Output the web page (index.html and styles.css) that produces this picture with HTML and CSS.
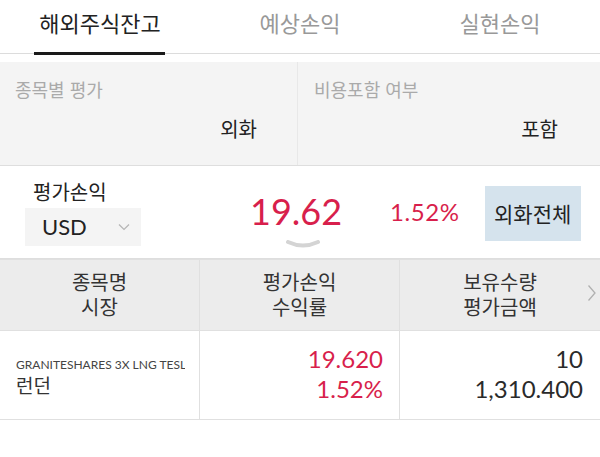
FILE: index.html
```html
<!DOCTYPE html>
<html lang="ko">
<head>
    <meta charset="UTF-8">
    <meta name="viewport" content="width=device-width, initial-scale=1.0">
    <title>해외주식잔고</title>
    <link rel="stylesheet" href="styles.css">
</head>
<body>
    <div class="tabs">
        <div class="tab active">해외주식잔고</div>
        <div class="tab">예상손익</div>
        <div class="tab">실현손익</div>
    </div>

    <div class="filters">
        <div class="filter">
            <div class="filter-label">종목별 평가</div>
            <div class="filter-value">외화</div>
        </div>
        <div class="filter">
            <div class="filter-label">비용포함 여부</div>
            <div class="filter-value">포함</div>
        </div>
    </div>

    <div class="summary">
        <div class="summary-left">
            <div class="summary-label">평가손익</div>
            <div class="currency">
                <span>USD</span>
                <svg class="caret" width="12" height="8" viewBox="0 0 12 8"><path d="M1 1.5 L6 6.5 L11 1.5" fill="none" stroke="#b5b5b5" stroke-width="1.2"/></svg>
            </div>
        </div>
        <div class="profit">19.62</div>
        <div class="rate">1.52%</div>
        <div class="fx-btn">외화전체</div>
        <svg class="expand" width="34" height="10" viewBox="0 0 34 10"><path d="M2 2 Q17 9 32 2" fill="none" stroke="#d4d4d4" stroke-width="4" stroke-linecap="round"/></svg>
    </div>

    <div class="table">
        <div class="row head">
            <div class="cell"><div>종목명</div><div>시장</div></div>
            <div class="cell"><div>평가손익</div><div>수익률</div></div>
            <div class="cell"><div>보유수량</div><div>평가금액</div></div>
            <svg class="more" width="10" height="18" viewBox="0 0 10 18"><path d="M1.5 1.5 L8 9 L1.5 16.5" fill="none" stroke="#b0b0b0" stroke-width="1.3"/></svg>
        </div>
        <div class="row body">
            <div class="cell name">
                <div class="ticker">GRANITESHARES 3X LNG TESLA</div>
                <div class="market">런던</div>
            </div>
            <div class="cell num red"><div>19.620</div><div>1.52%</div></div>
            <div class="cell num"><div>10</div><div>1,310.400</div></div>
        </div>
    </div>
</body>
</html>
```

FILE: styles.css
```css
body {
    margin: 0;
    font-family: 'Noto Sans CJK KR', 'Noto Sans', sans-serif;
    color: #222;
    background: #fff;
    width: 600px;
}
.tabs {
    display: flex;
    height: 53px;
    border-bottom: 1px solid #dcdcdc;
    margin-bottom: 8px;
}
.tab {
    flex: 1;
    display: flex;
    justify-content: center;
    font-size: 22px;
    line-height: 44px;
    color: #999;
}
.tab.active {
    position: relative;
    color: #222;
}
.tab.active::before {
    content: "";
    position: absolute;
    left: 34px;
    right: 35px;
    bottom: -2px;
    height: 3px;
    background: #1a1a1a;
}
.filters {
    display: flex;
    background: #f4f4f4;
    height: 103px;
    border-bottom: 1px solid #dedede;
}
.filter {
    width: 298px;
    padding: 12px 40px 0 15px;
    box-sizing: border-box;
    border-right: 1px solid #e8e8e8;
}
.filter + .filter {
    flex: 1;
    border-right: none;
    padding-left: 16px;
    padding-right: 42px;
}
.filter-label {
    font-size: 18px;
    color: #aaa;
    line-height: 30px;
}
.filter-value {
    text-align: right;
    font-size: 20px;
    line-height: 30px;
    margin-top: 10px;
}
.summary {
    position: relative;
    display: flex;
    align-items: center;
    height: 92px;
    border-bottom: 1px solid #dedede;
}
.summary-left {
    width: 140px;
    padding-left: 25px;
}
.summary-label {
    font-size: 20px;
    line-height: 26px;
    padding-left: 8px;
    margin-bottom: 3px;
}
.currency {
    width: 116px;
    height: 38px;
    background: #f4f4f4;
    display: flex;
    align-items: center;
    justify-content: space-between;
    padding: 0 11px 0 17px;
    box-sizing: border-box;
    font-family: 'Lato', sans-serif;
    font-size: 22px;
}
.profit {
    margin-left: 85px;
    font-family: 'Lato', sans-serif;
    font-size: 36px;
    color: #d81f4c;
    padding-bottom: 2px;
}
.rate {
    margin-left: 48px;
    font-family: 'Lato', sans-serif;
    font-size: 24px;
    letter-spacing: 0.6px;
    color: #d81f4c;
    padding-bottom: 2px;
}
.fx-btn {
    margin-left: 25px;
    width: 96px;
    height: 55px;
    background: #d5e3ed;
    display: flex;
    align-items: center;
    justify-content: center;
    font-size: 21px;
    margin-top: 2px;
}
.expand {
    position: absolute;
    left: 286px;
    bottom: 8px;
}
.row {
    display: flex;
    position: relative;
    border-bottom: 1px solid #e0e0e0;
}
.row .cell {
    box-sizing: border-box;
    width: 200px;
    border-right: 1px solid #e0e0e0;
}
.row .cell:nth-child(3) {
    flex: 1;
    border-right: none;
}
.head {
    background: #ececec;
    height: 70px;
    border-top: 1px solid #e0e0e0;
}
.head .cell {
    text-align: center;
    font-size: 20px;
    line-height: 25px;
    padding-top: 9px;
    color: #333;
}
.more {
    position: absolute;
    right: 3px;
    top: 24px;
}
.body {
    height: 88px;
}
.name {
    padding: 26px 14px 0 16px;
    overflow: hidden;
}
.ticker {
    font-family: 'Lato', sans-serif;
    font-size: 12px;
    color: #444;
    white-space: nowrap;
    overflow: hidden;
    line-height: 16px;
}
.market {
    font-size: 19px;
    line-height: 24px;
    color: #333;
}
.num {
    text-align: right;
    font-family: 'Lato', sans-serif;
    font-size: 24px;
    line-height: 30px;
    padding: 13px 16px 0 0;
    color: #2a2a2a;
}
.row .cell.num:nth-child(3) {
    padding-right: 17px;
}
.red {
    color: #d81f4c;
}
```
